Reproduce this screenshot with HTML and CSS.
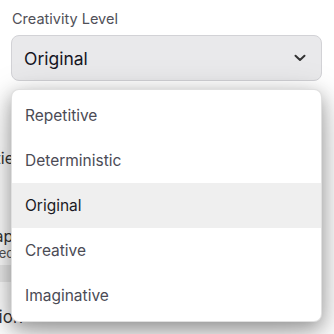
FILE: index.html
```html
<!DOCTYPE html>
<html>
<head>
<meta charset="utf-8">
<link rel="stylesheet" href="styles.css">
</head>
<body>
<div class="page">
  <div class="field">
    <div class="label">Creativity Level</div>
    <div class="select">
      <span class="value">Original</span>
      <svg class="chev" width="12" height="8" viewBox="0 0 12 8"><path d="M1.5 1.8 L6 6 L10.5 1.8" fill="none" stroke="#333" stroke-width="2" stroke-linecap="round" stroke-linejoin="round"/></svg>
    </div>
  </div>
  <div class="behind">
    <div class="brow r1">Verbosities</div>
    <div class="brow r2">Mind Map Size</div>
    <div class="brow r3 sub">Words selected</div>
    <div class="band"></div>
    <div class="brow r4">Description</div>
  </div>
  <div class="menu">
    <div class="item">Repetitive</div>
    <div class="item">Deterministic</div>
    <div class="item active">Original</div>
    <div class="item">Creative</div>
    <div class="item">Imaginative</div>
  </div>
</div>
</body>
</html>
```
FILE: styles.css
```css
html, body {
  margin: 0;
  padding: 0;
  background: #ffffff;
  font-family: Inter, "Noto Sans", sans-serif;
  overflow: hidden;
}
.page {
  position: relative;
  width: 334px;
  height: 334px;
  overflow: hidden;
}
.field {
  padding: 10px 12px 0 11px;
}
.label {
  font-size: 14.5px;
  color: #505058;
  line-height: 18px;
  margin-left: 1px;
  margin-bottom: 7px;
}
.select {
  box-sizing: border-box;
  height: 46px;
  width: 311px;
  border: 1px solid #d2d2d6;
  border-radius: 8px;
  background: #e9e9eb;
  display: flex;
  align-items: center;
  justify-content: space-between;
  padding: 0 15px 0 12px;
}
.value {
  font-size: 17.5px;
  color: #15151f;
}
.chev {
  display: block;
}
.behind {
  margin-left: -62px;
  color: #333;
  font-size: 16px;
  line-height: 20px;
}
.brow {
  white-space: nowrap;
}
.r1 { margin-top: 67px; }
.r2 { margin-top: 59px; line-height: 18px; }
.sub { font-size: 13px; line-height: 16px; color: #555; }
.band {
  height: 17px;
  width: 120px;
  margin-top: 4px;
  background: #ececec;
}
.r4 { margin-top: 25px; margin-left: -7px; font-size: 17px; }
.menu {
  position: absolute;
  left: 11px;
  top: 89px;
  width: 311px;
  box-sizing: border-box;
  padding: 3px 0;
  background: #fff;
  border: 1px solid rgba(0,0,0,0.12);
  border-radius: 8px;
  box-shadow: 0 6px 18px rgba(0,0,0,0.3), 0 12px 40px rgba(0,0,0,0.22);
}
.item {
  height: 45px;
  display: flex;
  align-items: center;
  padding-left: 13px;
  font-size: 15.5px;
  color: #4b4b55;
}
.item.active {
  background: #efefef;
  color: #1a1a24;
}
```
